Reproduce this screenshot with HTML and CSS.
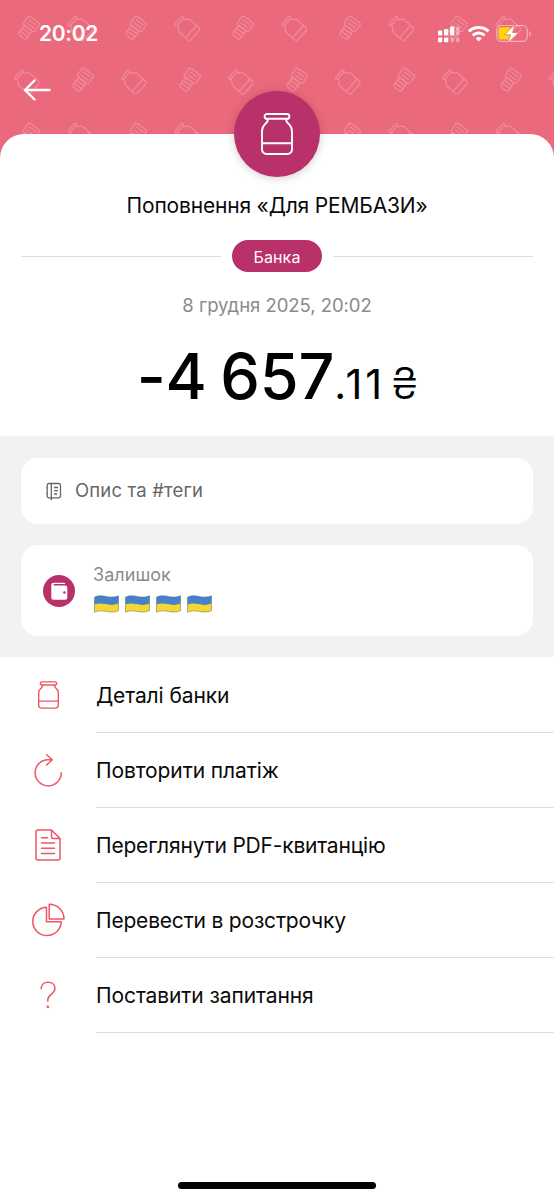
FILE: index.html
```html
<!DOCTYPE html>
<html lang="uk">
<head>
<meta charset="utf-8">
<meta name="viewport" content="width=device-width, initial-scale=1">
<title>Поповнення «Для РЕМБАЗИ»</title>
<link rel="stylesheet" href="styles.css">
</head>
<body>
<svg class="sprite" width="0" height="0" aria-hidden="true">
  <symbol id="jar" viewBox="0 0 32 42">
    <rect x="3.6" y="1" width="24.8" height="4.8" rx="2.4"/>
    <path d="M6.500 5.800c.6 1.600.2 2.800-1.300 4.200C2.600 12.300 1 14.700 1 18.500V36.500a4.500 4.500 0 0 0 4.500 4.500h21a4.500 4.500 0 0 0 4.500-4.500V18.500c0-3.800-1.600-6.200-4.200-8.500-1.500-1.400-1.900-2.600-1.300-4.200M1 30.300h30"/>
  </symbol>
  <symbol id="flag" viewBox="0 0 25 18">
    <path fill="#4482cd" d="M.5 2.200C4 .4 8 .5 12.500 1.500s8.500.8 12-.7V9c-3.500 1.500-8 1.500-12 .6S4 8.500.5 10z"/>
    <path fill="#f6d62f" d="M.5 9.500c3.500-1.600 7.500-1.200 12-.2s8.500.8 12-.8v7.200c-3.500 1.600-8 1.700-12 .8S4 15.500.5 17.200z"/>
    <path fill="none" stroke="#57665a" stroke-opacity=".6" stroke-width=".8" d="M.5 2.200C4 .4 8 .5 12.500 1.500s8.500.8 12-.7v14.900c-3.500 1.600-8 1.700-12 .8S4 15.500.5 17.200z"/>
  </symbol>
</svg>
<div class="screen">
  <header class="hero">
    <svg class="hero-pattern" width="554" height="178" aria-hidden="true">
      <defs>
        <g id="p-jar" transform="rotate(-48)">
          <rect x="-5.800" y="-11.500" width="11.600" height="2.600" rx="1.300"/>
          <path d="M-4.300-8.900c.2 1.200-.5 1.800-1.500 2.500C-7.500-5.200-8.300-4-8.300-2.200V8.500A2.300 2.300 0 0 0-6 10.800H6A2.300 2.300 0 0 0 8.300 8.500V-2.200C8.300-4 7.500-5.200 5.800-6.400 4.800-7.100 4.100-7.700 4.300-8.900M-8.300 5.500H8.300"/>
        </g>
        <g id="p-cash" transform="rotate(36)">
          <rect x="-6" y="-10.500" width="14" height="10.500" rx="1.800"/>
          <path d="M-3.500-7.200H5.500M-3.500-3.500H5.500"/>
          <rect x="-3.800" y="0" width="9.600" height="11" rx="2.800"/>
          <path d="M-3.800 3.600H5.800M-3.800 7.200H5.800"/>
        </g>
        <pattern id="tile" width="107" height="107" patternUnits="userSpaceOnUse">
          <g class="pattern-art">
            <use href="#p-cash" transform="translate(27.500 27.500)"/>
            <use href="#p-jar" transform="translate(80 28)"/>
            <use href="#p-jar" transform="translate(26.500 81.500)"/>
            <use href="#p-cash" transform="translate(81.500 79.500)"/>
          </g>
        </pattern>
      </defs>
      <rect width="554" height="178" fill="url(#tile)"/>
    </svg>
    <div class="status">
      <span class="clock">20:02</span>
      <svg class="status-icons" width="96" height="24" viewBox="0 0 96 24" aria-hidden="true">
        <g fill="#fff">
          <rect x="2" y="9.500" width="4.300" height="5" rx="1"/>
          <rect x="8" y="8" width="4.300" height="6.500" rx="1"/>
          <rect x="14" y="5.500" width="4.300" height="9" rx="1"/>
          <rect x="2" y="16.600" width="4.300" height="4.600" rx="1"/>
          <rect x="8" y="16.600" width="4.300" height="4.600" rx="1"/>
          <g opacity=".35"><rect x="20" y="5.500" width="3.500" height="9" rx="1"/><rect x="14.500" y="16.600" width="3.500" height="4.600" rx="1"/><rect x="20" y="16.600" width="3.500" height="4.600" rx="1"/></g>
          <path d="M42.700 20.600l-3-3.100a4.400 4.400 0 0 1 6 0z"/>
        </g>
        <g fill="none" stroke="#fff" stroke-width="2.900"><path d="M36.700 14.300a9.200 9.200 0 0 1 12 0M32.900 10.300a14.700 14.700 0 0 1 19.600 0"/></g>
        <rect x="60.800" y="4.500" width="30.400" height="15.800" rx="4.600" fill="none" stroke="#fff" stroke-opacity=".5" stroke-width="1.200"/>
        <path d="M93.300 10v5c2-.8 2-4.200 0-5z" fill="#fff" fill-opacity=".5"/>
        <rect x="62.500" y="6.200" width="13" height="12.400" rx="2.500" fill="#ffd60a"/>
        <path d="M78.800 3.500l-10.300 10.300h6l-2.800 8.400 11-10.600h-6.100z" fill="#fff" stroke="#ea697c" stroke-width=".8"/>
      </svg>
    </div>
    <svg class="back" width="28" height="24" viewBox="0 0 28 24" role="img" aria-label="Назад"><path d="M11.500 2.500 2 12l9.500 9.500M2 12h24.500"/></svg>
  </header>
  <main class="sheet">
    <div class="badge"><svg width="32" height="42"><use href="#jar"/></svg></div>
    <h1 class="title">Поповнення «Для РЕМБАЗИ»</h1>
    <div class="category"><span class="pill">Банка</span></div>
    <p class="date">8 грудня 2025, 20:02</p>
    <p class="amount"><span class="whole">-4 657</span><span class="cents">.11</span><span class="currency">₴</span></p>
    <section class="cards">
      <div class="card note">
        <svg class="note-icon" width="16" height="19" viewBox="0 0 16 19" aria-hidden="true"><path d="M3 1.500h9.700a1.800 1.800 0 0 1 1.800 1.800v10.700a1.800 1.800 0 0 1-1.800 1.800H3A1.800 1.800 0 0 1 1.200 14V3.300A1.800 1.800 0 0 1 3 1.500zM5.300.8v17.500M8 5.500h4M8 8.700h4M8 12h3M.3 5.500h1.500M.3 12h1.500"/></svg>
        <span class="note-text">Опис та #теги</span>
      </div>
      <div class="card balance">
        <svg width="32" height="32" viewBox="0 0 32 32" aria-hidden="true">
          <circle cx="16" cy="16" r="16" fill="#b8316b"/>
          <path fill="#fff" d="M10.500 7.800h10.300a1.500 1.500 0 0 1 1.500 1.300H10.700v1.300h11.600a2 2 0 0 1 2 2v10.300a2 2 0 0 1-2 2H10.500a2.200 2.200 0 0 1-2.200-2.200V10a2.200 2.200 0 0 1 2.200-2.200z"/>
          <circle cx="21.400" cy="17.500" r="1.200" fill="#b8316b"/>
        </svg>
        <div class="balance-body">
          <span class="balance-label">Залишок</span>
          <div class="flags">
            <svg width="25" height="18"><use href="#flag"/></svg>
            <svg width="25" height="18"><use href="#flag"/></svg>
            <svg width="25" height="18"><use href="#flag"/></svg>
            <svg width="25" height="18"><use href="#flag"/></svg>
          </div>
        </div>
      </div>
    </section>
    <ul class="menu">
      <li><span class="icon raised"><svg width="21" height="30"><use href="#jar" class="thick"/></svg></span><span class="label">Деталі банки</span></li>
      <li><span class="icon"><svg width="32" height="36" viewBox="0 0 32 36"><path d="M29.300 19.800A13.100 13.100 0 1 1 16.200 6.700H20M14.700 1.800 20.200 6.700l-5.500 5.300"/></svg></span><span class="label">Повторити платіж</span></li>
      <li><span class="icon raised"><svg width="26" height="32" viewBox="0 0 26 32"><path d="M3 1h13.500L25 9.500V29a2 2 0 0 1-2 2H3a2 2 0 0 1-2-2V3a2 2 0 0 1 2-2zM16.500 1v7a1.500 1.500 0 0 0 1.500 1.500H25M6.500 8.800h6M6.500 14h13M6.500 19.200h13M6.500 24.500h13"/></svg></span><span class="label tight">Переглянути PDF-квитанцію</span></li>
      <li><span class="icon raised"><svg width="34" height="34" viewBox="0 0 34 34"><path d="M15.500 4.200A14.200 14.200 0 1 0 30.200 18.700H15.500zM18.200 1.200A14.800 14.800 0 0 1 33 16H18.200z"/></svg></span><span class="label tight">Перевести в розстрочку</span></li>
      <li><span class="icon raised"><svg width="18" height="30" viewBox="0 0 18 30"><path d="M2.200 8.800C2.200 4.800 5 2.200 9 2.200s7 2.400 7 6.100c0 3-1.600 4.400-3.700 6S8.800 17 8.800 19.500v1.700"/><circle class="dot" cx="8.800" cy="26.800" r="1.400"/></svg></span><span class="label">Поставити запитання</span></li>
    </ul>
  </main>
  <div class="home-bar"></div>
</div>
</body>
</html>
```
FILE: styles.css
```css
* { box-sizing: border-box; }
body { margin: 0; background: #fff; font-family: Inter, "Liberation Sans", sans-serif; color: #0a0a0a; }
h1, p, ul { margin: 0; padding: 0; font-weight: 400; }
.sprite { display: none; }
.screen { width: 554px; height: 1200px; display: flex; flex-direction: column; overflow: hidden; }

.hero { height: 178px; margin-bottom: -44px; flex: none; background: #ea697c; position: relative; isolation: isolate; }
.hero-pattern { position: absolute; inset: 0; z-index: -1; }
.pattern-art { fill: none; stroke: #ef8b9b; stroke-width: 1.200; }
.status { display: flex; justify-content: space-between; align-items: center; height: 66px; padding: 0 22px 0 39px; }
.clock { color: #fff; font-size: 21px; font-weight: 600; letter-spacing: -.3px; }
.status-icons { display: block; }
.back { display: block; margin: 12px 0 0 23px; fill: none; stroke: #fff; stroke-width: 2.400; stroke-linecap: round; stroke-linejoin: round; }

.sheet { position: relative; flex: 1; background: #fff; border-radius: 24px 24px 0 0; display: flex; flex-direction: column; }
.badge { align-self: center; width: 86px; height: 86px; margin-top: -43px; border-radius: 50%; background: #b8316b; display: flex; align-items: center; justify-content: center; box-shadow: 0 1px 8px rgba(60, 0, 30, .22); }
.badge svg { fill: none; stroke: #fff; stroke-width: 1.900; }
.title { margin-top: 13px; text-align: center; font-size: 21px; line-height: 32px; letter-spacing: -.18px; }
.category { display: flex; align-items: center; gap: 11px; padding: 0 21px; margin-top: 18px; }
.category::before, .category::after { content: ""; flex: 1; height: 1px; background: #dedede; }
.pill { width: 90px; height: 32px; border-radius: 16px; background: #b8316b; color: #fff; font-size: 16px; line-height: 34px; text-align: center; letter-spacing: .1px; }
.date { margin-top: 18px; text-align: center; color: #8b8b8b; font-size: 18.500px; line-height: 31px; letter-spacing: -.05px; }
.amount { height: 115px; display: flex; align-items: baseline; justify-content: center; line-height: 110px; color: #000; white-space: pre; }
.whole { font-size: 63px; font-weight: 500; word-spacing: -3px; letter-spacing: -.2px; }
.cents { font-size: 41.500px; letter-spacing: 2.800px; }
.currency { font-size: 43px; font-weight: 300; margin-left: 7px; }

.cards { background: #f2f2f2; padding: 22px 21px 21px; height: 221px; display: flex; flex-direction: column; gap: 21px; }
.card { background: #fff; border-radius: 17px; display: flex; align-items: center; }
.note { height: 66px; padding-left: 25px; gap: 13px; color: #666; font-size: 18.500px; letter-spacing: .15px; }
.note-text { padding-bottom: 2px; }
.note-icon { fill: none; stroke: #666; stroke-width: 1.300; }
.balance { height: 91px; padding-left: 22px; gap: 18px; }
.balance-body { display: flex; flex-direction: column; gap: 8px; padding-bottom: 5px; }
.balance-label { color: #8b8b8b; font-size: 18px; line-height: 24px; letter-spacing: .05px; }
.flags { display: flex; gap: 6px; padding-left: 1px; }

.menu { list-style: none; padding-top: 1px; }
.menu li { height: 75px; display: flex; }
.icon { width: 96px; display: flex; align-items: center; justify-content: center; }
.icon.raised { padding-bottom: 2px; }
.icon svg { fill: none; stroke: #ee5663; stroke-width: 1.500; stroke-linecap: round; stroke-linejoin: round; }
.icon .thick { stroke-width: 2.200; }
.icon .dot { fill: #ee5663; stroke: none; }
.label { flex: 1; font-size: 21px; line-height: 75px; letter-spacing: -.1px; border-bottom: 1px solid #dedede; white-space: nowrap; }
.label.tight { letter-spacing: -.2px; }
.home-bar { position: absolute; left: 178px; top: 1182px; width: 198px; height: 7px; border-radius: 4px; background: #000; }
```
